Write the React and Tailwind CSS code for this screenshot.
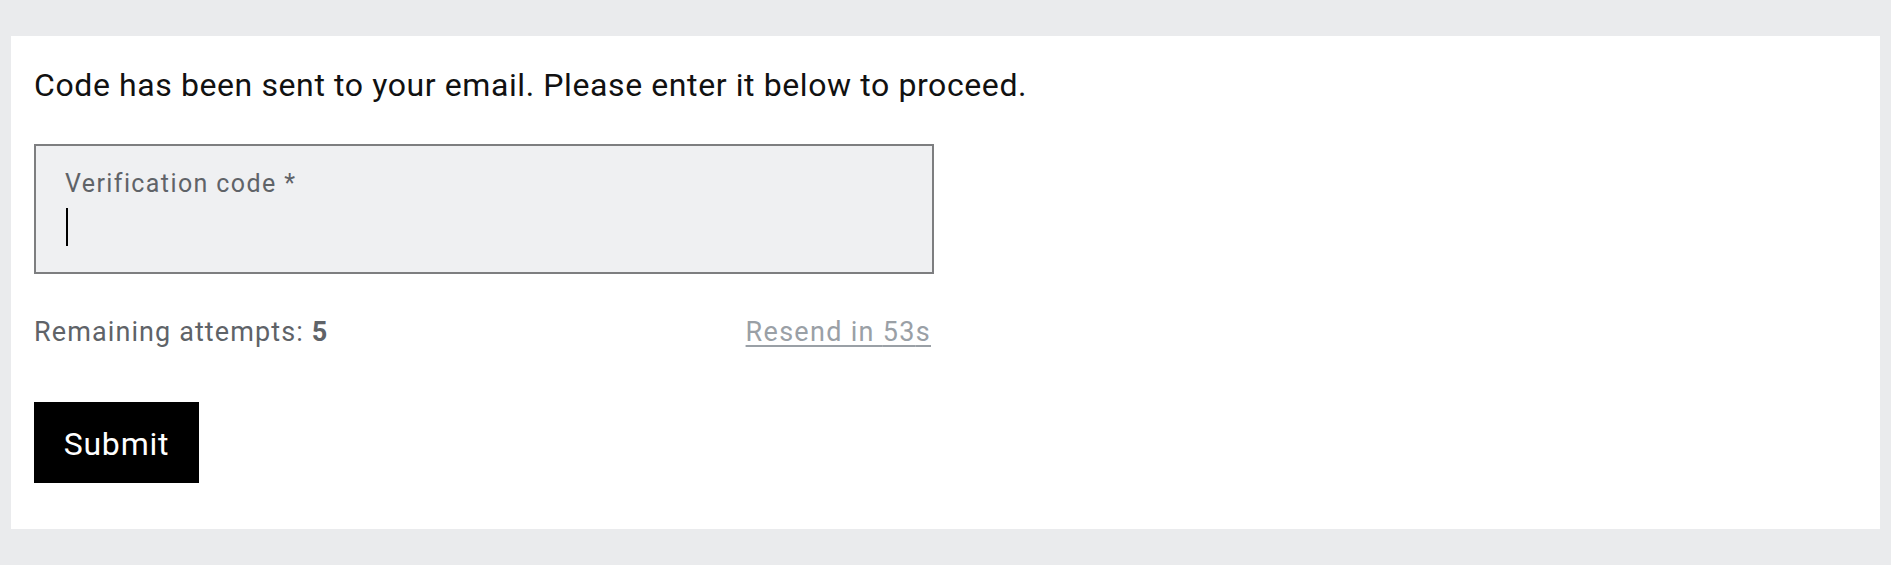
import React from 'react'

export default function App() {
  const attempts = 5
  const seconds = 53

  return (
    <div className="min-h-screen h-[565px] bg-[#eaebed] px-[11px] pt-[36px] font-['Roboto',sans-serif]">
      <div className="bg-white pl-[23px] pt-[31px] pb-[46px]">
        <p className="text-[32px] leading-[36px] tracking-[0.6px] text-[#111111]">
          Code has been sent to your email. Please enter it below to proceed.
        </p>

        {/* Code field */}
        <div className="mt-[41px] w-[900px] h-[130px] border-2 border-[#7d7e80] bg-[#eff0f2] pl-[29px] pt-[24px]">
          <div className="text-[25px] leading-[28px] tracking-[1.4px] text-[#5f6368]">Verification code *</div>
          <div className="mt-[10px] ml-[1px] w-[1.5px] h-[38px] bg-black" />
        </div>

        <div className="mt-[43px] w-[897px] flex items-start justify-between text-[27px] leading-[30px]">
          <span className="text-[#5f6368] tracking-[1.1px]">
            Remaining attempts: <span className="font-bold">{attempts}</span>
          </span>
          <a href="#" className="text-[#9aa0a6] underline underline-offset-[4px] tracking-[1.3px]">
            Resend in {seconds}s
          </a>
        </div>

        <button className="mt-[55px] w-[165px] h-[81px] bg-black text-white text-[32px] leading-[36px] tracking-[0.8px] flex items-center justify-center pt-[2px]">
          Submit
        </button>
      </div>
    </div>
  )
}
